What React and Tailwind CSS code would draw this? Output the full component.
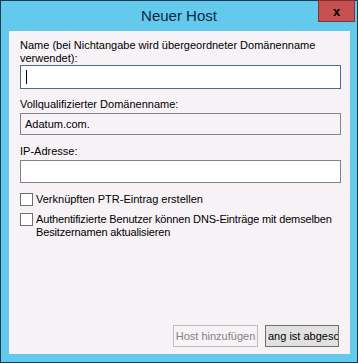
import React from 'react';

export default function App() {
    const font = { fontFamily: '"Liberation Sans", Arial, sans-serif' };
    return (
        <div className="w-[358px] h-[363px] bg-[#63caee] border border-[#1c3b4c] flex flex-col text-[11px] text-black" style={font}>
            {/* Title bar */}
            <div className="relative h-[30px] flex items-center justify-center">
                <span className="text-[15px] text-[#0f2740] mt-[1px]">Neuer Host</span>
                <div className="absolute right-[2px] -top-px w-[37px] h-[22px] bg-[#c75050] border border-[#7a3434] flex items-center justify-center">
                    <span className="text-[13px] font-bold text-black leading-none">x</span>
                </div>
            </div>

            {/* Client area */}
            <div className="flex-1 ml-[8px] mr-[7px] mb-[8px] bg-[#f6f2f5] flex flex-col pl-[11px] pr-[9px] pt-[8px] pb-[7px] leading-[13px]">
                <p>Name (bei Nichtangabe wird übergeordneter Domänenname verwendet):</p>
                <div className="h-[24px] border border-[#4d6a86] bg-white flex items-center pl-[5px]">
                    <span className="w-px h-[14px] bg-black" />
                </div>

                <p className="mt-[9px]">Vollqualifizierter Domänenname:</p>
                <div className="mt-[2px] h-[22px] border border-[#82868c] bg-[#f6f2f5] flex items-center pl-[4px]">
                    Adatum.com.
                </div>

                <p className="mt-[10px]">IP-Adresse:</p>
                <div className="mt-[2px] h-[23px] border border-[#7f8388] bg-white" />

                <label className="mt-[10px] flex items-start gap-[3px]">
                    <span className="w-[13px] h-[13px] border border-[#6f6f6f] bg-white shrink-0" />
                    <span>Verknüpften PTR-Eintrag erstellen</span>
                </label>
                <label className="mt-[7px] flex items-start gap-[3px] tracking-[-0.15px] -mr-[4px]">
                    <span className="w-[13px] h-[13px] border border-[#6f6f6f] bg-white shrink-0" />
                    <span>Authentifizierte Benutzer können DNS-Einträge mit demselben Besitzernamen aktualisieren</span>
                </label>

                <div className="mt-auto mr-[2px] flex justify-end gap-[7px]">
                    <div className="w-[85px] h-[22px] border border-[#bfbfbf] text-[#838383] flex items-center justify-center whitespace-nowrap">
                        Host hinzufügen
                    </div>
                    <div className="w-[74px] h-[22px] border border-[#707070] bg-[#e1e1e1] flex items-center overflow-hidden whitespace-nowrap">
                        <span className="pl-[2px]">ang ist abgesc</span>
                    </div>
                </div>
            </div>
        </div>
    );
}
